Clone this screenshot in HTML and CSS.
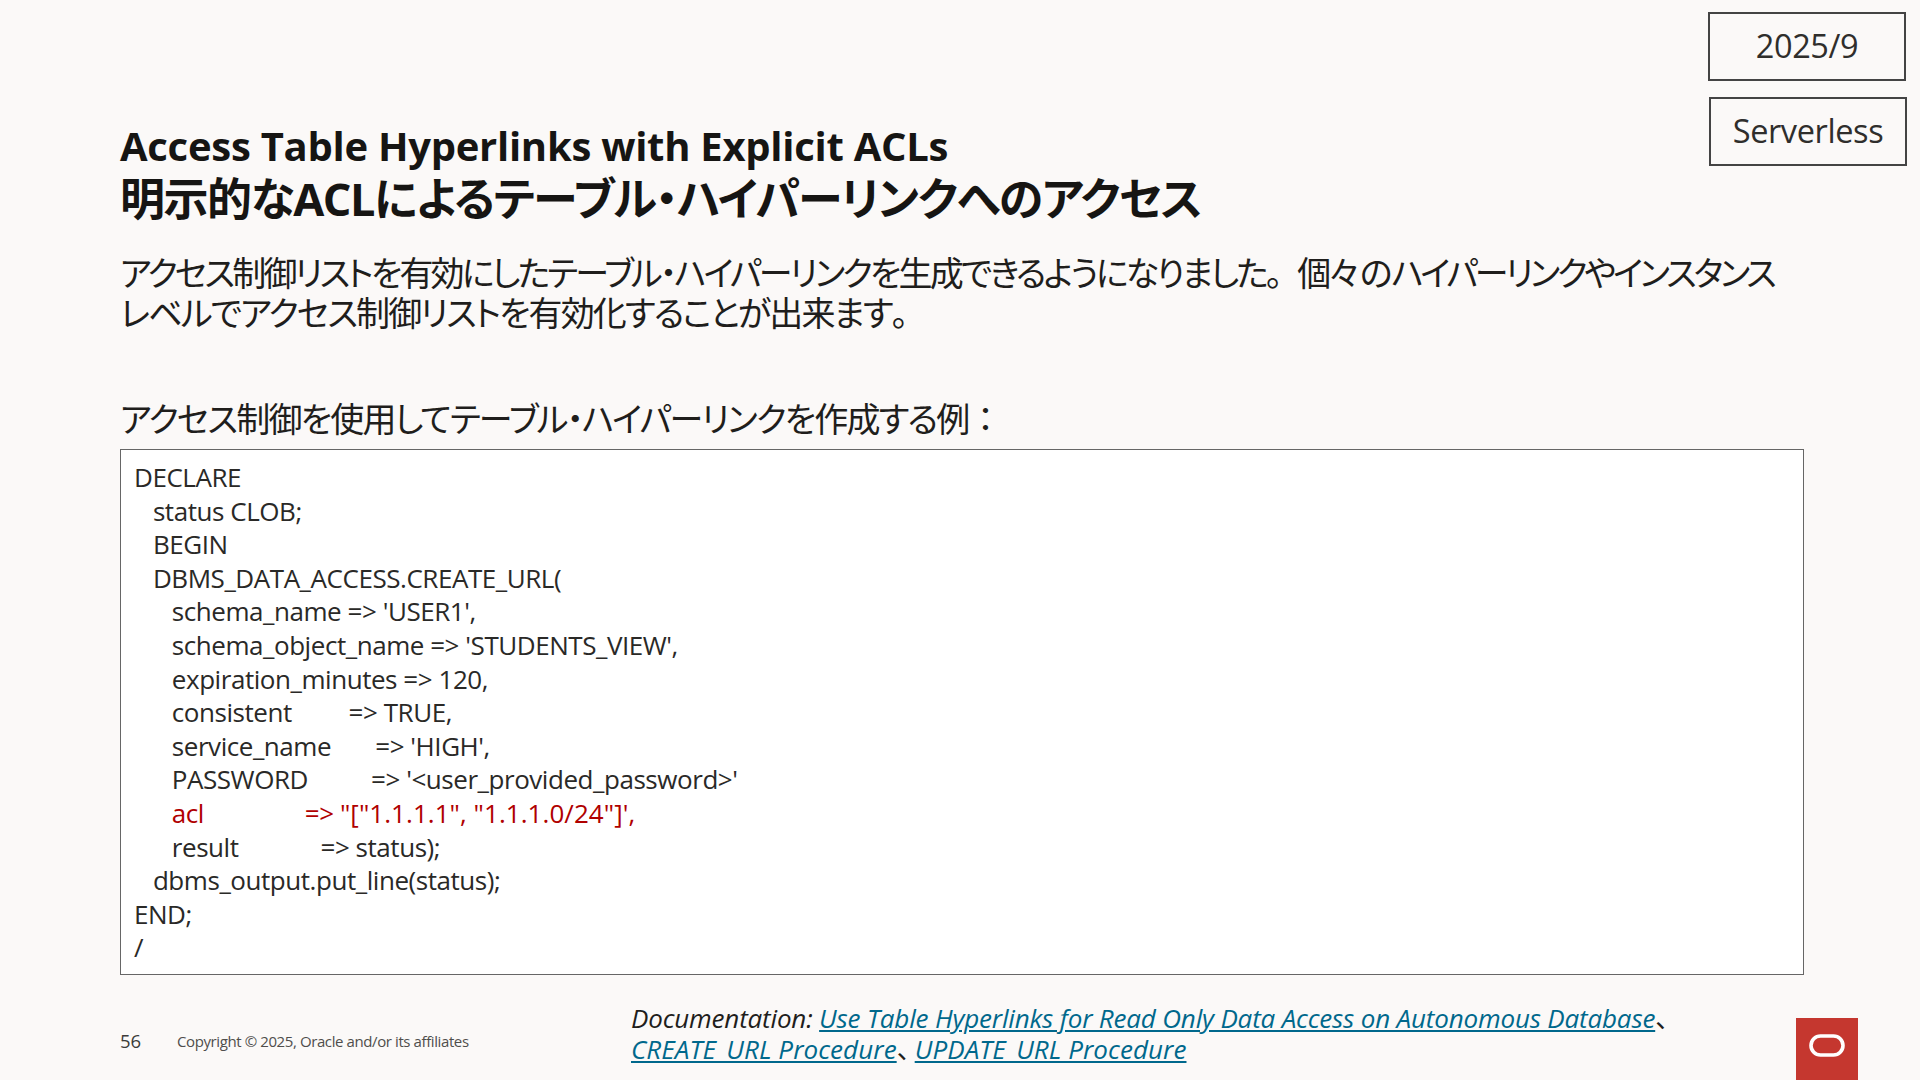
FILE: index.html
```html
<!DOCTYPE html>
<html lang="ja">
<head>
<meta charset="utf-8">
<title>Access Table Hyperlinks with Explicit ACLs</title>
<link rel="stylesheet" href="styles.css">
</head>
<body>
<main class="slide">
  <div class="tags">
    <div class="tag tag-date">2025/9</div>
    <div class="tag tag-kind">Serverless</div>
  </div>
  <h1 class="title"><span class="title-en">Access Table Hyperlinks with Explicit ACLs</span><span class="title-ja">明示的なACLによるテーブル・ハイパーリンクへのアクセス</span></h1>
  <p class="lead"><span class="lead-a">アクセス制御リストを有効にしたテーブル・ハイパーリンクを生成できるようになりました<span class="fw">。</span><span class="lead-tail">個々<span class="kern">の</span>ハイパーリンクやインスタンス</span></span><span class="lead-b">レベルでアクセス制御リストを有効化することが出来ます<span class="fw">。</span></span></p>
  <p class="sub">アクセス制御を使用してテーブル・ハイパーリンクを作成する例<span class="fw">：</span></p>
  <div class="code">
    <div class="line">DECLARE</div>
    <div class="line">   status CLOB;</div>
    <div class="line">   BEGIN</div>
    <div class="line">   DBMS_DATA_ACCESS.CREATE_URL(</div>
    <div class="line">      schema_name =&gt; 'USER1',</div>
    <div class="line">      schema_object_name =&gt; 'STUDENTS_VIEW',</div>
    <div class="line">      expiration_minutes =&gt; 120,</div>
    <div class="line">      consistent         =&gt; TRUE,</div>
    <div class="line">      service_name       =&gt; 'HIGH',</div>
    <div class="line">      PASSWORD          =&gt; '&lt;user_provided_password&gt;'</div>
    <div class="line hl">      acl                =&gt; <span class="acl-value">"["1.1.1.1", "1.1.1.0/24"]',</span></div>
    <div class="line">      result             =&gt; status);</div>
    <div class="line">   dbms_output.put_line(status);</div>
    <div class="line">END;</div>
    <div class="line">/</div>
  </div>
  <footer class="footer">
    <span class="page">56</span>
    <span class="copy">Copyright © 2025, Oracle and/or its affiliates</span>
    <p class="docs"><em>Documentation: <a href="#">Use Table Hyperlinks for Read Only Data Access on Autonomous Database</a></em>、<br><span class="docs-two"><em><a href="#">CREATE_URL Procedure</a></em><span class="sep">、</span><em><a href="#">UPDATE_URL Procedure</a></em></span></p>
    <div class="logo">
      <svg width="36" height="23" viewBox="0 0 36 23" aria-label="Oracle"><rect x="2" y="2" width="32" height="19" rx="9.5" fill="none" stroke="#fff" stroke-width="3.6"/></svg>
    </div>
  </footer>
</main>
</body>
</html>
```

FILE: styles.css
```css
* { box-sizing: border-box; }
html, body { margin: 0; padding: 0; }
body {
  width: 1920px;
  height: 1080px;
  overflow: hidden;
  background: #fbf9f8;
  color: #1f1e1c;
  font-family: "Open Sans", "Noto Sans CJK JP", sans-serif;
}
.slide {
  position: relative;
  width: 1920px;
  height: 1080px;
  padding: 121px 0 0 120px;
}
.tags {
  position: absolute;
  top: 12px;
  left: 1708px;
  display: flex;
  flex-direction: column;
  gap: 16px;
}
.tag {
  width: 198px;
  height: 69px;
  border: 2px solid #444;
  display: flex;
  align-items: center;
  justify-content: center;
  font-size: 32.5px;
  letter-spacing: -0.4px;
  padding-bottom: 2px;
  color: #2f2e2c;
}
.tag-kind { margin-left: 1px; }
.title {
  margin: 0;
  font-size: 40px;
  line-height: 50px;
  font-weight: 700;
  color: #161513;
}
.title-en, .title-ja { display: block; }
.title-en { letter-spacing: -0.27px; }
.title-ja {
  margin-top: 3px;
  font-size: 45px;
  letter-spacing: -1.45px;
  font-feature-settings: "palt";
}
.lead {
  margin: 29px 0 0;
  font-size: 34px;
  line-height: 40px;
  font-feature-settings: "palt";
  white-space: nowrap;
}
.lead-a, .lead-b { display: block; }
.lead-a { letter-spacing: -2.8px; }
.lead-tail { letter-spacing: -3.2px; }
.lead-b { letter-spacing: -1.9px; }
.fw { font-feature-settings: normal; }
.kern { margin-left: 3px; margin-right: 2px; }
.sub {
  margin: 63px 0 0;
  font-size: 34px;
  line-height: 46px;
  letter-spacing: -1.8px;
  font-feature-settings: "palt";
}
.code {
  margin: 7px 0 0;
  width: 1684px;
  height: 526px;
  padding: 11px 13px 0;
  background: #fff;
  border: 1px solid #666;
  font-size: 26px;
  line-height: 33.6px;
  letter-spacing: -0.45px;
  color: #2a2927;
}
.line { white-space: pre; height: 33.6px; }
.hl { color: #b00000; }
.acl-value { letter-spacing: 0.05px; }
.footer {
  position: absolute;
  left: 120px;
  right: 0;
  top: 1003px;
  height: 77px;
  display: flex;
  align-items: flex-start;
}
.page {
  margin-top: 26px;
  width: 57px;
  font-size: 18.5px;
  line-height: 24px;
  color: #3d3c3a;
}
.copy {
  margin-top: 27px;
  width: 454px;
  font-size: 15px;
  line-height: 22px;
  letter-spacing: -0.4px;
  color: #4f4e4c;
}
.docs {
  margin: 0;
  width: 1165px;
  font-size: 26px;
  line-height: 31px;
  letter-spacing: -0.17px;
}
.docs a { color: #00688c; }
.docs-two { letter-spacing: 0.08px; }
.sep { letter-spacing: -8px; }
.logo {
  position: absolute;
  left: 1676px;
  top: 15px;
  width: 62px;
  height: 62px;
  background: #c5372f;
  display: flex;
  align-items: center;
  justify-content: center;
  padding-bottom: 8px;
}
```
